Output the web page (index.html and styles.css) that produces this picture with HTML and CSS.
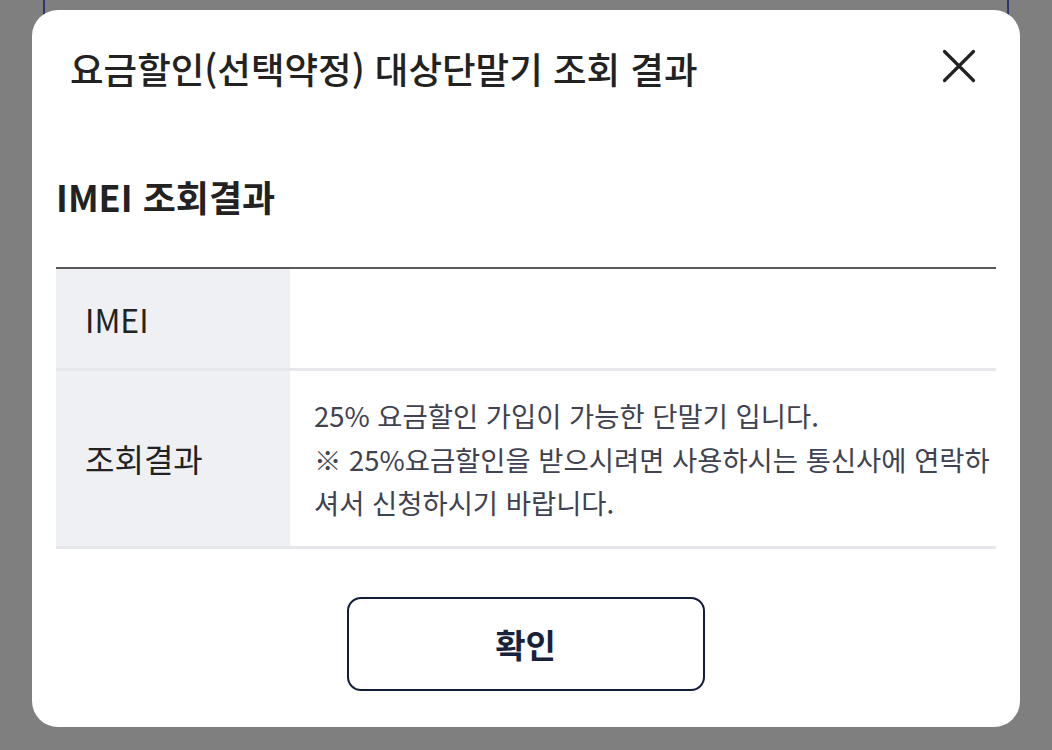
FILE: index.html
```html
<!DOCTYPE html>
<html lang="ko">
<head>
<meta charset="utf-8">
<title>요금할인 대상단말기 조회 결과</title>
<link rel="stylesheet" href="styles.css">
</head>
<body>
<div class="backdrop-page"></div>
<div class="dialog" role="dialog">
  <div class="dialog-head">
    <h1 class="dialog-title">요금할인(선택약정) 대상단말기 조회 결과</h1>
    <button class="close-btn" aria-label="닫기">
      <svg width="34" height="34" viewBox="0 0 34 34"><path d="M2.5 2.5 L31.5 31.5 M31.5 2.5 L2.5 31.5" stroke="#222" stroke-width="3.2" stroke-linecap="round" fill="none"/></svg>
    </button>
  </div>
  <div class="dialog-body">
    <h2 class="section-title">IMEI 조회결과</h2>
    <div class="result-table">
      <div class="row row-imei">
        <div class="th">IMEI</div>
        <div class="td"></div>
      </div>
      <div class="row row-result">
        <div class="th">조회결과</div>
        <div class="td">25% 요금할인 가입이 가능한 단말기 입니다.<br>※ 25%요금할인을 받으시려면 사용하시는 통신사에 연락하셔서 신청하시기 바랍니다.</div>
      </div>
    </div>
    <div class="actions">
      <button class="confirm-btn">확인</button>
    </div>
  </div>
</div>
</body>
</html>
```

FILE: styles.css
```css
html, body {
  margin: 0;
  padding: 0;
}
body {
  background: #7f7f7f;
  width: 1052px;
  height: 750px;
  overflow: hidden;
  position: relative;
  font-family: "Noto Sans CJK KR", "Noto Sans", sans-serif;
}
.backdrop-page {
  position: absolute;
  top: 0;
  left: 43px;
  width: 962px;
  height: 30px;
  border-left: 2px solid #2c3873;
  border-right: 2px solid #2c3873;
}
.dialog {
  position: relative;
  margin: 10px 0 0 32px;
  width: 988px;
  height: 717px;
  background: #fff;
  border-radius: 26px;
  box-sizing: border-box;
}
.dialog-head {
  display: flex;
  align-items: center;
  justify-content: space-between;
  padding: 38px 44px 0 38px;
  height: 80px;
  box-sizing: border-box;
}
.dialog-title {
  margin: 0;
  font-size: 36.5px;
  line-height: 44px;
  font-weight: 500;
  color: #222;
}
.close-btn {
  border: 0;
  background: none;
  padding: 0;
  width: 34px;
  height: 34px;
  margin-top: -6px;
  display: flex;
}
.dialog-body {
  padding: 0 24px;
}
.section-title {
  margin: 84px 0 0 0;
  font-size: 36px;
  line-height: 44px;
  font-weight: 700;
  color: #222;
}
.result-table {
  margin-top: 49px;
  border-top: 2px solid #595959;
}
.row {
  display: flex;
  border-bottom: 3px solid #e6e7ea;
}
.th {
  width: 234px;
  flex: none;
  background: #eff0f4;
  display: flex;
  align-items: center;
  padding-left: 29px;
  box-sizing: border-box;
  font-size: 32px;
  color: #222;
}
.td {
  flex: 1;
  padding: 0 0 0 24px;
  font-size: 27.4px;
  line-height: 43.5px;
  color: #3e4251;
  display: flex;
  align-items: center;
}
.row-imei {
  height: 99px;
}
.row-result .td {
  padding-top: 23px;
  padding-bottom: 21px;
  display: block;
}
.actions {
  display: flex;
  justify-content: center;
  margin-top: 48px;
}
.confirm-btn {
  width: 358px;
  height: 94px;
  border: 2px solid #121d3a;
  border-radius: 14px;
  background: #fff;
  font-family: "Noto Sans CJK KR", "Noto Sans", sans-serif;
  font-size: 33px;
  font-weight: 700;
  color: #17223d;
  margin-right: 1px;
}
```
